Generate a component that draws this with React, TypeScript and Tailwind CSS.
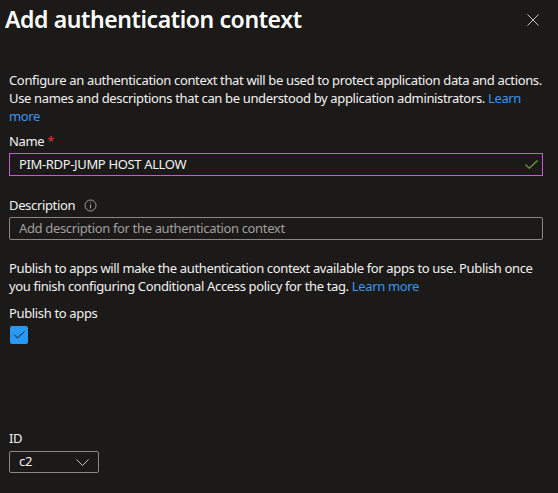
import React from 'react';

const FieldLabel: React.FC<{ children: React.ReactNode }> = ({ children }) => (
  <div className="text-[13px] leading-[18px] text-[#f3f2f1]">{children}</div>
);

const Link: React.FC<{ children: React.ReactNode }> = ({ children }) => (
  <a className="inline-block leading-[18px] text-[#3a96f0]">{children}</a>
);

export default function App() {
  return (
    <div className="w-[558px] h-[493px] bg-[#1b1a19] text-[#f3f2f1] font-['Noto_Sans',sans-serif] tracking-[-0.35px] overflow-hidden">
      {/* header */}
      <div className="flex items-start justify-between pl-[5px] pt-[3px] pr-[19px]">
        <h1 className="text-[23px] leading-[32px] font-semibold tracking-[-0.4px] text-white">Add authentication context</h1>
        <button className="mt-[11px] w-[12px] h-[12px] text-[#c8c6c4]" aria-label="Close">
          <svg viewBox="0 0 12 12" width="12" height="12" fill="none" stroke="currentColor" strokeWidth="1">
            <path d="M0.5 0.5l11 11M11.5 0.5l-11 11" />
          </svg>
        </button>
      </div>

      <div className="pl-[9px] pr-[15px] mt-[36px]">
        <p className="text-[13px] leading-[18px]">
          Configure an authentication context that will be used to protect application data and actions.
          Use names and descriptions that can be understood by application administrators.{' '}
          <Link>Learn</Link> <Link>more</Link>
        </p>

        <div className="mt-[7px]">
          <FieldLabel>
            Name <span className="text-[#e3303c]">*</span>
          </FieldLabel>
          <div className="mt-[3px] h-[23px] border border-[#c75bd6] flex items-center pl-[9px] pr-[4px]">
            <span className="flex-1 text-[13px]">PIM-RDP-JUMP HOST ALLOW</span>
            <svg width="13" height="9" viewBox="0 0 13 9" fill="none" stroke="#6fa03d" strokeWidth="1.2">
              <path d="M0.5 4.5l3.8 3.8L12.5 0.5" />
            </svg>
          </div>
        </div>

        <div className="mt-[20px]">
          <FieldLabel>
            <span className="inline-flex items-center gap-[9px]">
              Description
              <svg width="13" height="13" viewBox="0 0 13 13" fill="none" stroke="#a19f9d">
                <circle cx="6.5" cy="6.5" r="5.5" strokeWidth="1" />
                <path d="M6.5 5.5v4" strokeWidth="1.1" />
                <circle cx="6.5" cy="3.8" r="0.6" fill="#a19f9d" stroke="none" />
              </svg>
            </span>
          </FieldLabel>
          <div className="mt-[3px] h-[23px] border border-[#8a8886] rounded-[2px] flex items-center pl-[9px]">
            <span className="text-[13px] text-[#a19f9d]">Add description for the authentication context</span>
          </div>
        </div>

        <p className="mt-[19px] text-[13px] leading-[18px]">
          Publish to apps will make the authentication context available for apps to use. Publish once
          you finish configuring Conditional Access policy for the tag.{' '}
          <Link>Learn more</Link>
        </p>

        <div className="mt-[9px]">
          <FieldLabel>Publish to apps</FieldLabel>
          <div className="mt-[4px] ml-[1px] w-[18px] h-[18px] rounded-[2px] bg-[#2899f5] flex items-center justify-center">
            <svg width="11" height="8" viewBox="0 0 11 8" fill="none" stroke="#1b1a19" strokeWidth="1">
              <path d="M0.5 4l3 3L10.5 0.5" />
            </svg>
          </div>
        </div>

        <div className="mt-[85px]">
          <FieldLabel>ID</FieldLabel>
          <div className="mt-[4px] w-[90px] h-[22px] border border-[#8a8886] rounded-[2px] flex items-center justify-between pl-[9px] pr-[9px]">
            <span className="text-[13px]">c2</span>
            <svg width="13" height="7" viewBox="0 0 13 7" fill="none" stroke="#c8c6c4" strokeWidth="1">
              <path d="M0.5 0.5l6 6 6-6" />
            </svg>
          </div>
        </div>
      </div>
    </div>
  );
}
